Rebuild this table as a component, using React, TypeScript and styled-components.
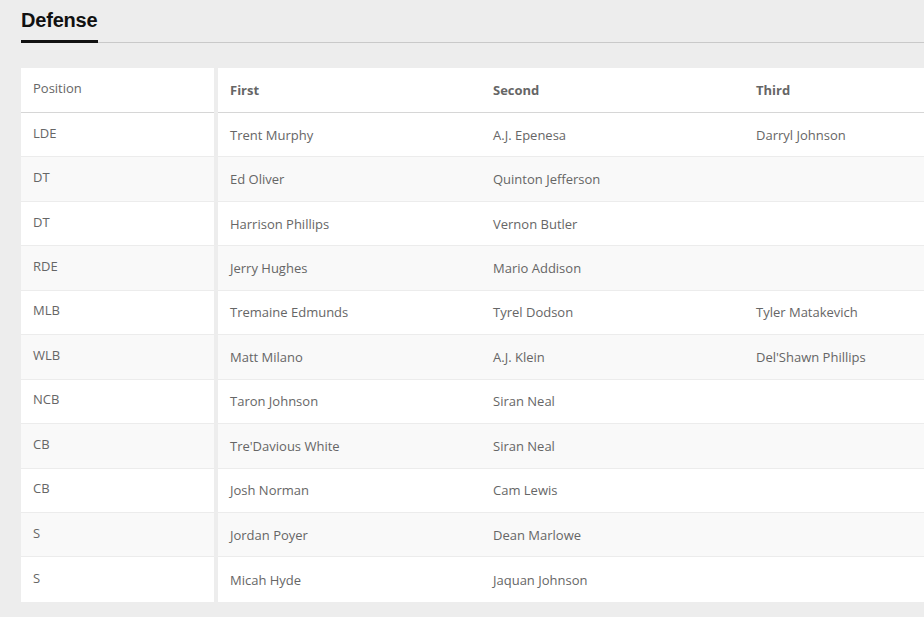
import React from "react";
import styled, { createGlobalStyle } from "styled-components";

const Global = createGlobalStyle`
  html, body { margin: 0; padding: 0; background: #ededed; }
  body { font-family: "Open Sans", "Noto Sans", sans-serif; overflow: hidden; }
`;

const Page = styled.div`
  width: 924px;
  height: 617px;
  overflow: hidden;
  padding-left: 21px;
  box-sizing: border-box;
`;

const TabBar = styled.div`
  display: flex;
  border-bottom: 1px solid #c9c9c9;
  height: 43px;
  box-sizing: border-box;
  width: 1200px;
`;

const Tab = styled.div`
  font-family: "Liberation Sans", Arial, sans-serif;
  font-weight: 700;
  font-size: 20px;
  color: #111;
  padding-top: 9px;
  box-sizing: border-box;
  width: 77px;
  border-bottom: 3px solid #111;
  margin-bottom: -1px;
  letter-spacing: -0.2px;
`;

const Tables = styled.div`
  display: flex;
  gap: 4px;
  margin-top: 25px;
  width: 1400px;
`;

const Panel = styled.div<{ $width: number }>`
  width: ${(p) => p.$width}px;
  background: #fff;
  flex: none;
`;

const Row = styled.div<{ $alt?: boolean; $head?: boolean; $last?: boolean }>`
  display: flex;
  align-items: center;
  height: ${(p) => (p.$head ? "45px" : "44.45px")};
  box-sizing: border-box;
  background: ${(p) => (p.$alt ? "#f9f9f9" : "#fff")};
  border-bottom: ${(p) =>
    p.$last ? "none" : p.$head ? "1px solid #d6d6d6" : "1px solid #ececec"};
`;

const Cell = styled.div<{ $head?: boolean; $pos?: boolean }>`
  width: ${(p) => (p.$pos ? "auto" : "263px")};
  flex: none;
  padding-left: 12px;
  box-sizing: border-box;
  font-size: 13px;
  color: #666;
  font-weight: ${(p) => (p.$head ? 700 : 400)};
  padding-bottom: ${(p) => (p.$pos ? "4px" : "0")};
  white-space: nowrap;
`;

const data: [string, string, string, string][] = [
  ["LDE", "Trent Murphy", "A.J. Epenesa", "Darryl Johnson"],
  ["DT", "Ed Oliver", "Quinton Jefferson", ""],
  ["DT", "Harrison Phillips", "Vernon Butler", ""],
  ["RDE", "Jerry Hughes", "Mario Addison", ""],
  ["MLB", "Tremaine Edmunds", "Tyrel Dodson", "Tyler Matakevich"],
  ["WLB", "Matt Milano", "A.J. Klein", "Del'Shawn Phillips"],
  ["NCB", "Taron Johnson", "Siran Neal", ""],
  ["CB", "Tre'Davious White", "Siran Neal", ""],
  ["CB", "Josh Norman", "Cam Lewis", ""],
  ["S", "Jordan Poyer", "Dean Marlowe", ""],
  ["S", "Micah Hyde", "Jaquan Johnson", ""],
];

export default function App() {
  return (
    <Page>
      <Global />
      <TabBar>
        <Tab>Defense</Tab>
      </TabBar>
      <Tables>
        <Panel $width={193}>
          <Row $head>
            <Cell $pos>Position</Cell>
          </Row>
          {data.map((r, i) => (
            <Row key={i} $alt={i % 2 === 1} $last={i === data.length - 1}>
              <Cell $pos>{r[0]}</Cell>
            </Row>
          ))}
        </Panel>
        <Panel $width={1052}>
          <Row $head>
            <Cell $head>First</Cell>
            <Cell $head>Second</Cell>
            <Cell $head>Third</Cell>
            <Cell $head></Cell>
          </Row>
          {data.map((r, i) => (
            <Row key={i} $alt={i % 2 === 1} $last={i === data.length - 1}>
              <Cell>{r[1]}</Cell>
              <Cell>{r[2]}</Cell>
              <Cell>{r[3]}</Cell>
              <Cell></Cell>
            </Row>
          ))}
        </Panel>
      </Tables>
    </Page>
  );
}
